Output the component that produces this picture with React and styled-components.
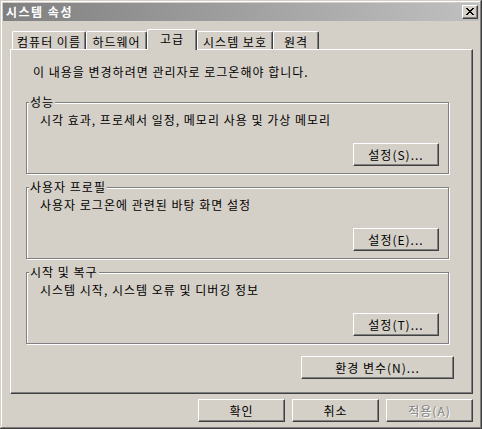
import React from "react";
import styled, { createGlobalStyle } from "styled-components";

const GlobalStyle = createGlobalStyle`
  html, body {
    margin: 0;
    padding: 0;
    background: #d4d0c8;
  }
  body {
    font-family: "Noto Sans CJK KR", "Noto Sans", sans-serif;
    font-size: 12px;
    letter-spacing: 1px;
    color: #000;
  }
`;

const tabs = [
  { label: "컴퓨터 이름", width: 74 },
  { label: "하드웨어", width: 61 },
  { label: "고급", width: 50, active: true },
  { label: "시스템 보호", width: 76 },
  { label: "원격", width: 46 },
];

const groups = [
  { title: "성능", text: "시각 효과, 프로세서 일정, 메모리 사용 및 가상 메모리", button: "설정(S)..." },
  { title: "사용자 프로필", text: "사용자 로그온에 관련된 바탕 화면 설정", button: "설정(E)..." },
  { title: "시작 및 복구", text: "시스템 시작, 시스템 오류 및 디버깅 정보", button: "설정(T)..." },
];

const Window = styled.div`
  box-sizing: border-box;
  width: 482px;
  height: 429px;
  padding: 3px;
  background: #d4d0c8;
  box-shadow: inset -1px -1px 0 #404040, inset 1px 1px 0 #d4d0c8,
    inset -2px -2px 0 #808080, inset 2px 2px 0 #fff;
  display: flex;
  flex-direction: column;
`;

const TitleBar = styled.div`
  height: 18px;
  display: flex;
  align-items: center;
  justify-content: space-between;
  padding: 0 1px 0 3px;
  background: linear-gradient(to right, #808080, #c0c0c0);
`;

const Title = styled.span`
  color: #fff;
  font-weight: bold;
  font-size: 12px;
  letter-spacing: 1.5px;
  line-height: 18px;
`;

const CloseButton = styled.div`
  box-sizing: border-box;
  width: 16px;
  height: 14px;
  background: #d4d0c8;
  border: 1px solid;
  border-color: #fff #404040 #404040 #fff;
  box-shadow: inset -1px -1px 0 #808080;
  display: flex;
  align-items: center;
  justify-content: center;
  padding: 0 1px 1px 0;
`;

const Body = styled.div`
  flex: 1;
  display: flex;
  flex-direction: column;
  padding: 8px 6px 0 7px;
`;

const TabRow = styled.div`
  height: 20px;
  display: flex;
  align-items: flex-end;
  padding-left: 2px;
`;

const Tab = styled.div`
  box-sizing: border-box;
  width: ${(p) => p.$width}px;
  height: ${(p) => (p.$active ? 21 : 18)}px;
  margin-bottom: ${(p) => (p.$active ? -1 : 0)}px;
  position: relative;
  z-index: ${(p) => (p.$active ? 2 : 0)};
  background: #d4d0c8;
  border-top: 1px solid #fff;
  border-left: 1px solid #fff;
  border-right: 1px solid #404040;
  box-shadow: inset -1px 0 0 #808080;
  border-radius: 2px 2px 0 0;
  display: flex;
  align-items: center;
  justify-content: center;
  line-height: 14px;
  padding: ${(p) => (p.$active ? "0 0 3px" : "2px 0 0")};
  white-space: nowrap;
`;

const Panel = styled.div`
  box-sizing: border-box;
  height: 345px;
  border: 1px solid;
  border-color: #fff #404040 #404040 #fff;
  box-shadow: inset -1px -1px 0 #808080;
  padding: 15px 0 0 15px;
  display: flex;
  flex-direction: column;
  align-items: flex-start;
`;

const Message = styled.div`
  margin-left: 7px;
  line-height: 14px;
`;

const GroupBox = styled.div`
  box-sizing: border-box;
  position: relative;
  width: 423px;
  height: 72px;
  margin-top: ${(p) => (p.$first ? 23 : 13)}px;
  border: 1px solid #808080;
  box-shadow: inset 1px 1px 0 #fff, 1px 1px 0 #fff;
  padding: 10px 9px 6px 13px;
  display: flex;
  flex-direction: column;
`;

const Legend = styled.span`
  position: absolute;
  top: -8px;
  left: 2px;
  padding: 0 1px;
  line-height: 14px;
  background: #d4d0c8;
`;

const Description = styled.div`
  line-height: 14px;
`;

const Button = styled.button`
  box-sizing: border-box;
  width: ${(p) => p.$width}px;
  height: 23px;
  padding: 0;
  background: #d4d0c8;
  border: 1px solid;
  border-color: #fff #404040 #404040 #fff;
  border-radius: 0;
  box-shadow: inset -1px -1px 0 #808080;
  font-family: "Noto Sans CJK KR", "Noto Sans", sans-serif;
  font-size: 12px;
  letter-spacing: 1px;
  line-height: 14px;
  color: ${(p) => (p.disabled ? "#808080" : "#000")};
  text-shadow: ${(p) => (p.disabled ? "1px 1px 0 #fff" : "none")};
  align-self: ${(p) => p.$align || "auto"};
  margin-top: ${(p) => p.$top || 0}px;
  margin-right: ${(p) => p.$right || 0}px;
`;

const Footer = styled.div`
  display: flex;
  justify-content: flex-end;
  gap: 7px;
  margin-top: 5px;
`;

const CloseIcon = () => (
  <svg width="8" height="7" viewBox="0 0 8 7" shapeRendering="crispEdges">
    <path
      fill="#000"
      d="M0 0h2v1H0zM6 0h2v1H6zM1 1h2v1H1zM5 1h2v1H5zM2 2h4v1H2zM3 3h2v1H3zM2 4h4v1H2zM1 5h2v1H1zM5 5h2v1H5zM0 6h2v1H0zM6 6h2v1H6z"
    />
  </svg>
);

export default function App() {
  return (
    <>
      <GlobalStyle />
      <Window>
        <TitleBar>
          <Title>시스템 속성</Title>
          <CloseButton>
            <CloseIcon />
          </CloseButton>
        </TitleBar>
        <Body>
          <TabRow>
            {tabs.map((t) => (
              <Tab key={t.label} $width={t.width} $active={t.active}>
                {t.label}
              </Tab>
            ))}
          </TabRow>
          <Panel>
            <Message>이 내용을 변경하려면 관리자로 로그온해야 합니다.</Message>
            {groups.map((g, i) => (
              <GroupBox key={g.title} $first={i === 0}>
                <Legend>{g.title}</Legend>
                <Description>{g.text}</Description>
                <Button $width={86} $align="flex-end" $top={16}>
                  {g.button}
                </Button>
              </GroupBox>
            ))}
            <Button $width={153} $align="flex-end" $top={12} $right={18}>
              환경 변수(N)...
            </Button>
          </Panel>
          <Footer>
            <Button $width={87}>확인</Button>
            <Button $width={87}>취소</Button>
            <Button $width={87} disabled>
              적용(A)
            </Button>
          </Footer>
        </Body>
      </Window>
    </>
  );
}
